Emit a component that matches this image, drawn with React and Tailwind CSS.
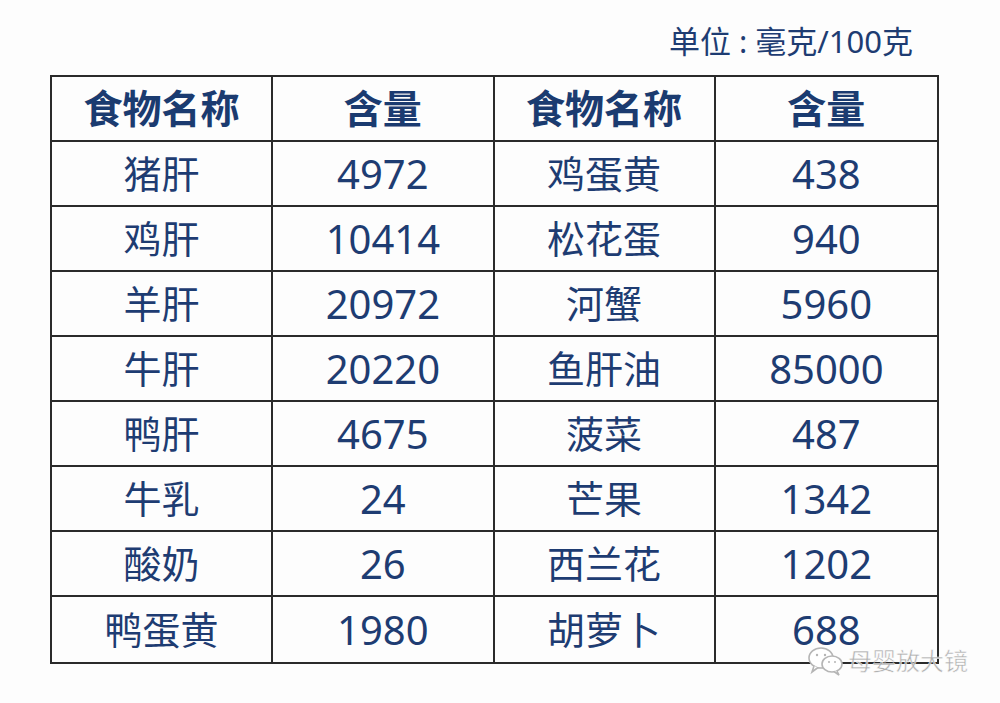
const rows = [
  ["猪肝", "4972", "鸡蛋黄", "438"],
  ["鸡肝", "10414", "松花蛋", "940"],
  ["羊肝", "20972", "河蟹", "5960"],
  ["牛肝", "20220", "鱼肝油", "85000"],
  ["鸭肝", "4675", "菠菜", "487"],
  ["牛乳", "24", "芒果", "1342"],
  ["酸奶", "26", "西兰花", "1202"],
  ["鸭蛋黄", "1980", "胡萝卜", "688"],
];

const cjk = { fontFamily: '"Noto Sans", "Noto Sans CJK SC", sans-serif' };

const WechatIcon = () => (
  <svg width="40" height="32" viewBox="0 0 40 32" fill="none" stroke="#b5b5b5" strokeWidth="1.6">
    <ellipse cx="15" cy="13" rx="12" ry="10" fill="#fff" />
    <path d="M8 21 L6 27 L12 22.5" fill="#fff" />
    <ellipse cx="26" cy="19" rx="10" ry="8" fill="#fff" />
    <path d="M31 26 L33 30 L28 26.5" fill="#fff" />
    <circle cx="11" cy="10" r="1.2" fill="#b5b5b5" stroke="none" />
    <circle cx="19" cy="10" r="1.2" fill="#b5b5b5" stroke="none" />
    <circle cx="23" cy="17" r="1" fill="#b5b5b5" stroke="none" />
    <circle cx="29" cy="17" r="1" fill="#b5b5b5" stroke="none" />
  </svg>
);

export default function App() {
  return (
    <div className="w-[1000px] h-[703px] bg-[#fdfdfd] relative overflow-hidden" style={cjk}>
      <div className="h-[75px] flex items-start justify-end pr-[87px] pt-[20px]">
        <span className="text-[31px] leading-[42px] text-[#1e3c72]">
          单位<span className="px-[8px]">:</span>毫克/100克
        </span>
      </div>
      <div className="ml-[50px] w-[889px] border-2 border-[#2a2a2a]">
        <div className="grid grid-cols-4 h-[65px] border-b-2 border-[#2a2a2a]">
          {["食物名称", "含量", "食物名称", "含量"].map((t, i) => (
            <div
              key={i}
              className={`flex items-center justify-center text-[39px] font-bold text-[#1b3b70] ${i < 3 ? "border-r-2 border-[#2a2a2a]" : ""}`}
            >
              {t}
            </div>
          ))}
        </div>
        {rows.map((r, ri) => (
          <div
            key={ri}
            className={`grid grid-cols-4 h-[65px] ${ri < rows.length - 1 ? "border-b-2 border-[#2a2a2a]" : ""}`}
          >
            {r.map((t, i) => (
              <div
                key={i}
                className={`flex items-center justify-center ${i % 2 ? "text-[40px]" : "text-[38px]"} text-[#1e3c72] ${i < 3 ? "border-r-2 border-[#2a2a2a]" : ""}`}
              >
                {t}
              </div>
            ))}
          </div>
        ))}
      </div>
      <div className="absolute left-[806px] top-[643px] flex items-center gap-[2px]">
        <WechatIcon />
        <span
          className="text-[24px] text-[#a8a8a8] opacity-90"
          style={{ WebkitTextStroke: "0.5px #fff" }}
        >
          母婴放大镜
        </span>
      </div>
    </div>
  );
}
